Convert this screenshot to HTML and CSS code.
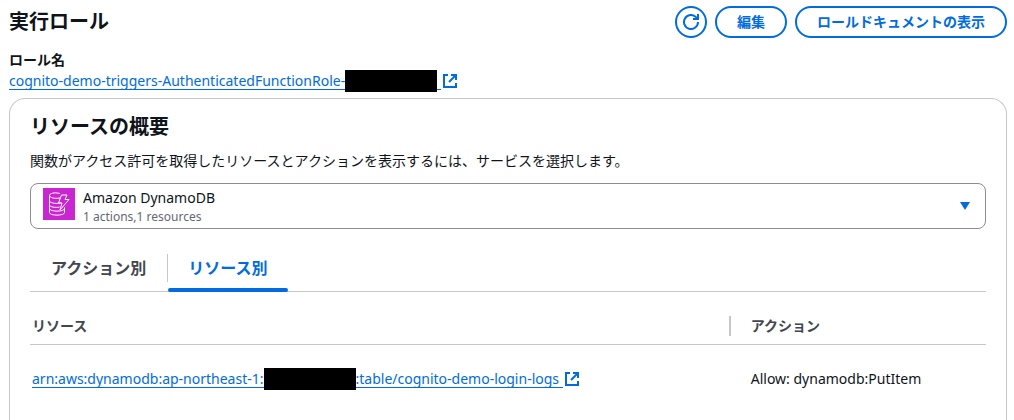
FILE: index.html
```html
<!DOCTYPE html>
<html lang="ja">
<head>
<meta charset="utf-8">
<meta name="viewport" content="width=device-width, initial-scale=1">
<title>実行ロール</title>
<link rel="stylesheet" href="styles.css">
</head>
<body class="page">
<header class="header">
  <h1 class="title">実行ロール</h1>
  <div class="actions">
    <button class="btn btn-icon" type="button" aria-label="更新">
      <svg class="icon" viewBox="0 0 16 16" aria-hidden="true"><path d="M15 8a7 7 0 1 1-2-4.900L15 5"/><path d="M15 0v5h-5"/></svg>
    </button>
    <button class="btn" type="button">編集</button>
    <button class="btn" type="button">ロールドキュメントの表示</button>
  </div>
</header>
<dl class="role">
  <dt class="role-label">ロール名</dt>
  <dd class="role-value"><a class="link" href="#role"><span class="link-text">cognito-demo-triggers-AuthenticatedFunctionRole-<span class="redacted"></span></span><svg class="icon" viewBox="0 0 16 16" aria-hidden="true"><path d="M6 2H2v12h12v-4"/><path d="M9 2h5v5M14 2L7 9"/></svg></a></dd>
</dl>
<main class="panel">
  <h2 class="title">リソースの概要</h2>
  <label class="description" for="service">関数がアクセス許可を取得したリソースとアクションを表示するには、サービスを選択します。</label>
  <div class="picker">
    <select class="picker-select" id="service" aria-describedby="service-meta">
      <option>Amazon DynamoDB</option>
    </select>
    <div class="picker-overlay">
      <svg class="service-icon" viewBox="0 0 32 32" aria-hidden="true">
        <rect class="service-bg" width="32" height="32"/>
        <path d="M17 5.500C11 4 6.500 5.500 6.500 7.500S11 11 17 10M6.500 7.500v17c0 3.500 15 3.500 15 0v-5M6.500 12.500c0 2.500 6 3.500 11 2.500M6.500 16.500c0 2.500 6 3.500 10 2.500M6.500 20.500c0 3.500 15 3.500 15 0M18.500 7h5.500l-2 4.500h4L17 22l2-7h-3.500z"/>
      </svg>
      <span class="picker-meta" id="service-meta">1 actions,1 resources</span>
      <svg class="caret" viewBox="0 0 10 8" aria-hidden="true"><path d="M0 0h10L5 8z"/></svg>
    </div>
  </div>
  <div class="tabs" role="tablist">
    <button class="tab" type="button" role="tab" aria-selected="false">アクション別</button>
    <button class="tab" type="button" role="tab" aria-selected="true">リソース別</button>
  </div>
  <table class="table">
    <thead>
      <tr><th class="col-resource" scope="col"><div class="head-cell">リソース</div></th><th scope="col">アクション</th></tr>
    </thead>
    <tbody>
      <tr>
        <td><a class="link" href="#table"><span class="link-text">arn:aws:dynamodb:ap-northeast-1:<span class="redacted"></span>:table/cognito-demo-login-logs</span><svg class="icon" viewBox="0 0 16 16" aria-hidden="true"><path d="M6 2H2v12h12v-4"/><path d="M9 2h5v5M14 2L7 9"/></svg></a></td>
        <td>Allow: dynamodb:PutItem</td>
      </tr>
    </tbody>
  </table>
</main>
</body>
</html>
```
FILE: styles.css
```css
* {
  box-sizing: border-box;
}

.page {
  display: flex;
  flex-direction: column;
  min-height: 100vh;
  margin: 0;
  padding: 6px 7px 0 9px;
  background: #fff;
  color: #0f141a;
  font: 14px/20px "Noto Sans", "Noto Sans CJK JP", sans-serif;
}

.header {
  display: flex;
  align-items: center;
  justify-content: space-between;
}

.title {
  margin: 0;
  font-size: 20px;
  line-height: 24px;
}

.actions {
  display: flex;
  gap: 8px;
}

.btn {
  height: 32px;
  padding: 0 20px;
  border: 2px solid #006ce0;
  border-radius: 16px;
  background: #fff;
  color: #006ce0;
  font: inherit;
  font-weight: 700;
}

.btn-icon {
  display: grid;
  place-items: center;
  width: 32px;
  padding: 0;
}

.icon {
  flex: none;
  width: 16px;
  height: 16px;
  fill: none;
  stroke: #006ce0;
  stroke-width: 2;
}

.role {
  margin: 12px 0 8px;
}

.role-label {
  font-weight: 700;
}

.role-value {
  margin: 2px 0 0;
}

.link {
  display: flex;
  align-items: center;
  gap: 1px;
  color: #006ce0;
  text-decoration: none;
}

.link-text {
  display: flex;
  align-items: center;
  height: 18px;
  padding-right: 4px;
  border-bottom: 1px solid #006ce0;
  white-space: nowrap;
}

.redacted {
  width: 92px;
  height: 22px;
  background: #000;
}

.panel {
  flex: 1;
  padding: 16px 20px 0;
  border: 1px solid #c6c6cd;
  border-bottom: 0;
  border-radius: 16px 16px 0 0;
}

.description {
  display: block;
  margin: 12px 0;
}

.picker {
  display: grid;
}

.picker-select,
.picker-overlay {
  grid-area: 1 / 1;
}

.picker-select {
  height: 46px;
  padding: 0 40px 16px 52px;
  border: 1px solid #8c8c94;
  border-radius: 8px;
  background: #fff;
  color: inherit;
  font: inherit;
  appearance: none;
}

.picker-overlay {
  display: flex;
  align-items: center;
  gap: 8px;
  padding: 0 16px 4px 13px;
  pointer-events: none;
}

.service-icon {
  width: 32px;
  height: 32px;
  fill: none;
  stroke: #fff;
  stroke-linejoin: round;
}

.service-bg {
  fill: #c925d1;
  stroke: none;
}

.picker-meta {
  align-self: flex-end;
  color: #656871;
  font-size: 12px;
  line-height: 16px;
}

.caret {
  width: 10px;
  height: 8px;
  margin: 4px 0 0 auto;
  fill: #006ce0;
}

.tabs {
  display: flex;
  margin-top: 20px;
  border-bottom: 1px solid #c6c6cd;
}

.tab {
  position: relative;
  height: 42px;
  padding: 0 21px 4px;
  border: 0;
  background: none;
  color: #424650;
  font: inherit;
  font-size: 16px;
  font-weight: 700;
}

.tab + .tab::before {
  content: "";
  position: absolute;
  top: 5px;
  left: 0;
  height: 28px;
  border-left: 1px solid #c6c6cd;
}

.tab[aria-selected="true"] {
  color: #006ce0;
}

.tab[aria-selected="true"]::after {
  content: "";
  position: absolute;
  inset: auto 0 -1px 1px;
  height: 4px;
  border-radius: 2px;
  background: #006ce0;
}

.table {
  width: 100%;
  margin-top: 16px;
  border-collapse: collapse;
}

.table th,
.table td {
  padding: 8px 2px;
  text-align: left;
}

.table th {
  border-bottom: 1px solid #c6c6cd;
  color: #424650;
}

.table td {
  padding-top: 24px;
}

.table th + th,
.table td + td {
  padding-left: 20px;
}

.col-resource {
  width: 73.3%;
}

.table .col-resource {
  padding-right: 0;
}

.head-cell {
  border-right: 2px solid #c6c6cd;
}
```
